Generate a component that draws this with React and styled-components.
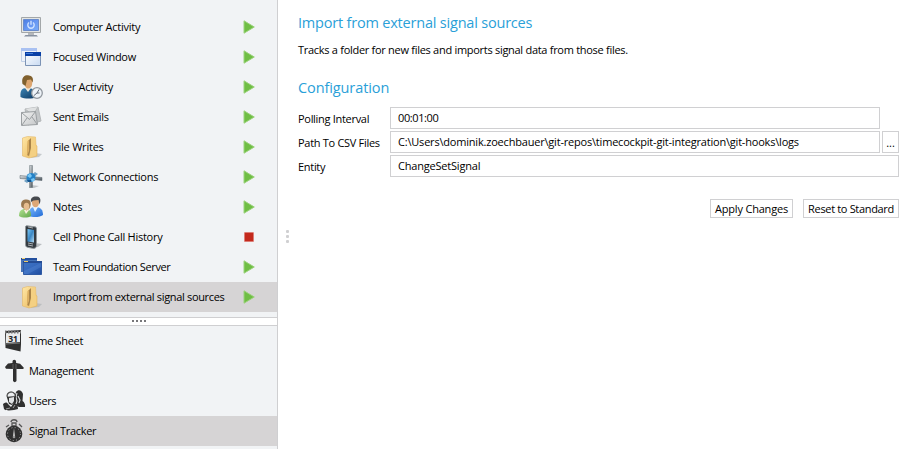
import React from "react";
import styled, { createGlobalStyle } from "styled-components";

const Global = createGlobalStyle`
  * { box-sizing: border-box; }
  body { margin: 0; background: #fff; overflow: hidden; }
`;

const Window = styled.div`
  display: flex;
  width: 914px;
  height: 449px;
  background: #fff;
  color: #000;
  font: 11px/16px "Open Sans", "Noto Sans", sans-serif;
`;
const Sidebar = styled.aside`
  display: flex;
  flex-direction: column;
  flex: 0 0 278px;
  background: #f1f3f5;
  border-right: 1px solid #cfcfd1;
`;
const SignalList = styled.nav`
  height: 317px;
  padding-top: 12px;
`;
const Row = styled.div`
  display: flex;
  align-items: center;
  height: 30px;
  padding-left: ${(p) => p.$indent}px;
  background: ${(p) => (p.$selected ? "#d6d4d5" : "transparent")};
`;
const IconSlot = styled.span`
  display: flex;
  flex: 0 0 ${(p) => p.$width}px;
`;
const Text = styled.span`
  white-space: pre;
  letter-spacing: ${(p) => p.$track || 0}px;
`;
const RowLabel = styled(Text)`
  flex: 1;
`;
const StateSlot = styled.span`
  display: flex;
  flex: 0 0 35px;
`;
const Splitter = styled.div`
  display: flex;
  justify-content: center;
  gap: 2px;
  height: 9px;
  padding-top: 2px;
  background: #fff;
  border: solid #cfcfd1;
  border-width: 1px 0;
`;
const Grip = styled.i`
  width: 2px;
  height: 2px;
  background: #77777a;
`;
const SideSplitter = styled.div`
  display: flex;
  flex-direction: column;
  align-items: center;
  gap: 2px;
  flex: 0 0 20px;
  padding: 230px 1px 0 0;
`;
const SideGrip = styled.i`
  width: 3px;
  height: 3px;
  border-radius: 1px;
  background: #d0d0d2;
`;
const Content = styled.main`
  width: 601px;
  padding-top: 12px;
`;
const Heading = styled.h2`
  margin: 0;
  color: #2a9fd8;
  font-size: 14.5px;
  font-weight: 400;
  line-height: 22px;
  white-space: pre;
  letter-spacing: ${(p) => p.$track || 0}px;
`;
const Description = styled.p`
  margin: 8px 0 19px;
  letter-spacing: -0.285px;
`;
const Form = styled.div`
  display: grid;
  grid-template-columns: 92px 490px 19px;
  grid-auto-rows: 22px;
  gap: 2px 0;
  padding-top: 8px;
`;
const FieldLabel = styled(Text)`
  padding-top: 4px;
`;
const Field = styled.div`
  grid-column: 2 / ${(p) => (p.$wide ? 4 : 3)};
  padding: 2px 7px;
  border: 1px solid #d0d0d2;
`;
const Button = styled.button`
  display: flex;
  align-items: center;
  justify-content: center;
  width: ${(p) => p.$width}px;
  height: 19px;
  padding: 0;
  font: inherit;
  color: inherit;
  background: #fff;
  border: 1px solid #d0d0d2;
`;
const BrowseButton = styled(Button)`
  height: 22px;
  margin-left: 2px;
  padding-top: 2px;
`;
const Actions = styled.div`
  display: flex;
  justify-content: flex-end;
  gap: 10px;
  margin-top: 22px;
`;

const Svg = ({ children, size = 24 }) => (
  <svg width={size} height={size} viewBox={`0 0 ${size} ${size}`}>{children}</svg>
);

const Grad = ({ id, from, to, mid }) => (
  <defs>
    <linearGradient id={id} x1="0" y1="0" x2="1" y2="1">
      <stop stopColor={from} />
      {mid && <stop offset=".5" stopColor={mid} />}
      <stop offset="1" stopColor={to} />
    </linearGradient>
  </defs>
);

const Monitor = () => (
  <Svg>
    <Grad id="screen" from="#4c7ce0" mid="#6797f2" to="#79adf9" />
    <path d="M2.500 2.500h19v15h-19z" fill="#e3e5e4" stroke="#a3a7a9" />
    <path d="M4.500 4.500h15v11h-15z" fill="url(#screen)" stroke="#6a8ccd" />
    <path d="M9 18h6v2H9z" fill="#b5b8bc" />
    <path d="M6.500 20h11l1.500 1.500H5z" fill="#8791a0" />
    <path d="M10 7.500a3.200 3.200 0 1 0 4 0M12 5.800v4" fill="none" stroke="#cfe2ff" strokeWidth="1.400" />
  </Svg>
);
const Windows = () => (
  <Svg>
    <Grad id="winbody" from="#ffffff" to="#c8daf2" />
    <path d="M2.500 3.500h15v13h-15z" fill="#edf2fa" stroke="#c0cfe6" />
    <path d="M2 3h16v3H2z" fill="#a9c1f2" />
    <path d="M6.500 7.500h15v13h-15z" fill="url(#winbody)" stroke="#7c93b5" />
    <path d="M6 7h16v4H6z" fill="#083fa6" />
    <path d="M7 8h7v1H7z" fill="#3e79d6" />
  </Svg>
);
const UserClock = () => (
  <Svg>
    <Grad id="shirt" from="#3d85b5" to="#0b3660" />
    <path d="M1.500 22c-.5-6 1-9 6-9h3c5 1 7 4 7 9-4 2-12 2-16 0z" fill="url(#shirt)" />
    <path d="m6 13 3 4 3-4z" fill="#f3e8d8" />
    <path d="M4.500 5c1-4 8-4 9 0l-.5 5c-1 4-5 5-7 1z" fill="#dca56f" />
    <path d="M3.500 9C2 2 6-.5 10 .5c4 .5 4.500 3.500 3.500 7L12 4.500 8 5 6.500 11z" fill="#80602e" />
    <circle cx="18" cy="18" r="5.300" fill="#eef3f8" stroke="#92989f" strokeWidth="1.300" />
    <path d="m15 20.500 3-2.500 2-3.500M18 18h2.500" fill="none" stroke="#626c79" />
  </Svg>
);
const Mail = () => (
  <Svg>
    <Grad id="mail" from="#f2f3f3" to="#c4c6c8" />
    <path d="m6 4 13-2 3 14-13 4z" fill="#c3c6c8" stroke="#b4b7b9" />
    <path d="m6 4 8 6 5-8" fill="#dfe1e2" stroke="#b7babb" />
    <path d="m2.500 7.500 14-1 2 13-16 1z" fill="url(#mail)" stroke="#9b9fa2" />
    <path d="m2.500 7.500 8 7 6-8M3 20l5-7m10 6-5-7" fill="none" stroke="#999da0" />
  </Svg>
);
const Folder = () => (
  <Svg>
    <Grad id="folder" from="#ffe7a5" to="#e9b75c" />
    <path d="m16 18 7 1-3 3-8 1z" fill="#aeb2b5" opacity=".65" />
    <path d="m3.500 3 5-1.500 8 .5.500 8 1 1v10l-8 2-6.500-2z" fill="url(#folder)" stroke="#e2b766" strokeWidth=".6" />
    <path d="m9 6 3-3v10l-2 8-2-1z" fill="#aa8449" />
    <path d="m8.500 6 1.500-1v11l-2 5z" fill="#dfb162" />
    <path d="m12 3 4.500-.5v8l1 1v9l-7 2 1.500-8z" fill="#f4d083" />
  </Svg>
);
const Network = () => (
  <Svg>
    <Grad id="pipe" from="#dde1e3" mid="#92999e" to="#4c555c" />
    <path d="m12 20 8 1-5 2h-5z" fill="#bfc3c6" />
    <path d="M10.500.5h3v22h-3z" fill="url(#pipe)" stroke="#69747b" strokeWidth=".5" />
    <path d="m1 10.500 22 2v3l-22-2z" fill="url(#pipe)" stroke="#58646c" strokeWidth=".5" />
    <path d="m5 16 11-9 3 2-11 9z" fill="#70a0c2" />
    <circle cx="12" cy="12.500" r="4.500" fill="#2582c7" />
    <path d="m8 11 3-3 2 3-2 2zM12 14l3-1 1 2-3 2z" fill="#79c8f6" />
    <path d="M8 15h4v2H9z" fill="#125592" />
  </Svg>
);
const People = () => (
  <Svg>
    <Grad id="green" from="#b3e394" to="#62a64a" />
    <Grad id="blue" from="#77b6ff" to="#226bd5" />
    <path d="M10 21c0-6 1-9 6-9 6 0 8 3 8 8-2 2-10 3-14 1z" fill="url(#blue)" />
    <path d="m14 12 2 5 3-5z" fill="#e8f3ff" />
    <ellipse cx="16.500" cy="7.500" rx="3.600" ry="4.800" fill="#dda777" />
    <path d="M12 7C11 2 15 1 18 1.500c4 .5 4 4 2.500 8l-1-4.500-5 .5z" fill="#46494e" />
    <path d="M0 21c0-5 2-7 6-7 5 0 6 2 6 7-3 2-9 2-12 0z" fill="url(#green)" />
    <path d="m5 15 2 4 3-4z" fill="#f8f0e0" />
    <path d="M2.500 12C1 6 4 4.500 7.500 4.500c5 0 5 5 3 9l-3 2z" fill="#9b7850" />
    <ellipse cx="7.500" cy="11.500" rx="2.800" ry="3.700" fill="#e7bd8f" />
  </Svg>
);
const Phone = () => (
  <Svg>
    <Grad id="phone" from="#79c8f6" mid="#3b87c4" to="#b7def5" />
    <path d="m16 18 7 1-4 3-5 1z" fill="#b9bdc0" />
    <path d="m8 .8 8 1c1 0 1.500 1 1.500 2v17c0 2-2 3-4 2.500l-5-1C7 22 6.500 21 6.500 19V2c0-1 .5-1.200 1.500-1.200z" fill="#353b41" stroke="#91979b" />
    <path d="m8.500 4 6.500 1v12.500l-6.500-1z" fill="url(#phone)" />
    <path d="m9 2 5 1M9 18l5 1m-5 1 5 1" stroke="#aab0b4" />
  </Svg>
);
const Server = () => (
  <Svg>
    <Grad id="server" from="#3f75c4" mid="#3468bd" to="#204c9e" />
    <path d="M2 3h16v14H2z" fill="#4774b8" />
    <path d="M2 3h16v2H2z" fill="#234f9e" />
    <path d="M3 3h3v1H3z" fill="#f4d06c" />
    <path d="M4.500 6.500h18v13h-18z" fill="url(#server)" stroke="#2f5aa4" />
    <path d="M4 6h19v2H4z" fill="#244c94" />
    <path d="M5 6h4v1H5z" fill="#edcc6b" />
    <path d="m5 16 17-8v4L9 19H5z" fill="#5587d3" opacity=".4" />
  </Svg>
);

const Play = () => (
  <Svg size={14}>
    <path d="m2 .8 10.300 6.200L2 13.200z" fill="#6fbe44" stroke="#9bd27c" strokeWidth="1" strokeLinejoin="round" />
  </Svg>
);
const Stop = () => (
  <Svg size={14}>
    <rect x="2.500" y="2.500" width="9" height="9" rx=".5" fill="#c3291c" stroke="#dc7e77" />
  </Svg>
);

const Calendar = () => (
  <Svg>
    <path d="m2 2 16-1v14l-.5 7.500L2.500 19z" fill="#303030" />
    <path d="m3 4 14-1v10l-14 1z" fill="#e8eaeb" />
    <path d="M2 3h16" stroke="#777" strokeWidth="3" strokeDasharray="1.500 1.500" />
    <text x="10" y="12.500" textAnchor="middle" fontFamily="Open Sans" fontWeight="700" fontSize="8.500" fill="#222">31</text>
    <path d="m2.500 15 14.500-1" stroke="#777" />
  </Svg>
);
const Signpost = () => (
  <Svg>
    <path d="M9.500 2.500a1.800 1.800 0 0 1 3.600 0V4l4 .8L21 9l-1 1h-6.500v12c-1 1.500-2.500 1.500-3.500 0V10L3 9.800 2 8l3-3.500L9.500 4z" fill="#303030" />
    <path d="M10 5v5m3-5v5" stroke="#777" strokeWidth=".7" />
  </Svg>
);
const UsersDark = () => (
  <Svg>
    <path d="M13 3c2-3 6-2 7 2l-.5 7c2 1 3 4 2.500 6h-6l-6-3z" fill="#303030" />
    <path d="m14 4-1 4 1 4-1 3m2-8 2 4-1 3" fill="none" stroke="#d9dbdd" strokeWidth="1.100" />
    <path d="M3.500 7c0-6 9-6 9.500 0l-1 5-3 4-3-1z" fill="#303030" />
    <path d="M4.200 7c1-5 7-5 8 0l-2 .5-5 .5z" fill="#eceef0" stroke="#555" strokeWidth=".7" />
    <path d="m6 9 5-1v4l-2 3-3-2z" fill="#e0e2e4" />
    <path d="M0 15c2-2 4-2 5 0l3 3 2-3c4 0 5 2 5 5l-4 1c-4 .5-8 1-10-1z" fill="#303030" />
    <path d="m3 20 4-1m3 0 2-3" stroke="#bbb" strokeWidth=".8" />
  </Svg>
);
const Stopwatch = () => (
  <Svg>
    <path d="M8 3c0-3 6-3 6 0M9 4h4v3H9zM3 8l3-2M16 5l3 3" fill="none" stroke="#555" strokeWidth="1.300" />
    <circle cx="11" cy="15" r="8.300" fill="#303030" />
    <circle cx="11" cy="15" r="6.500" fill="none" stroke="#aaa" strokeWidth="1" strokeDasharray="1 2.400" />
    <path d="m11 9 .8 8h-1.600z" fill="#eee" />
    <circle cx="11" cy="18" r="1.300" fill="#999" />
  </Svg>
);

const signals = [
  { name: "Computer Activity", icon: Monitor, track: -0.24 },
  { name: "Focused Window", icon: Windows, track: -0.28 },
  { name: "User Activity", icon: UserClock, track: -0.27 },
  { name: "Sent Emails", icon: Mail, track: -0.3 },
  { name: "File Writes", icon: Folder, track: -0.22 },
  { name: "Network Connections", icon: Network, track: -0.28 },
  { name: "Notes", icon: People, track: -0.2 },
  { name: "Cell Phone Call History", icon: Phone, track: -0.26, stopped: true },
  { name: "Team Foundation Server", icon: Server, track: -0.38 },
  { name: "Import from external signal sources", icon: Folder, track: -0.33, selected: true },
];
const modules = [
  { name: "Time Sheet", icon: Calendar, track: -0.3 },
  { name: "Management", icon: Signpost, track: -0.33 },
  { name: "Users", icon: UsersDark, track: -0.4 },
  { name: "Signal Tracker", icon: Stopwatch, track: -0.32, selected: true },
];

export default function App() {
  return (
    <Window>
      <Global />
      <Sidebar>
        <SignalList>
          {signals.map(({ name, icon: Icon, track, stopped, selected }) => (
            <Row key={name} $indent={19} $selected={selected}>
              <IconSlot $width={34}><Icon /></IconSlot>
              <RowLabel $track={track}>{name}</RowLabel>
              <StateSlot>{stopped ? <Stop /> : <Play />}</StateSlot>
            </Row>
          ))}
        </SignalList>
        <Splitter><Grip /><Grip /><Grip /><Grip /></Splitter>
        {modules.map(({ name, icon: Icon, track, selected }) => (
          <Row key={name} $indent={3} $selected={selected}>
            <IconSlot $width={26}><Icon /></IconSlot>
            <RowLabel $track={track}>{name}</RowLabel>
          </Row>
        ))}
      </Sidebar>
      <SideSplitter><SideGrip /><SideGrip /><SideGrip /></SideSplitter>
      <Content>
        <Heading $track={-0.2}>Import from external signal sources</Heading>
        <Description>Tracks a folder for new files and imports signal data from those files.</Description>
        <Heading $track={-0.1}>Configuration</Heading>
        <Form>
          <FieldLabel $track={-0.3}>Polling Interval</FieldLabel>
          <Field><Text $track={-0.4}>00:01:00</Text></Field>
          <span />
          <FieldLabel $track={-0.3}>Path To CSV Files</FieldLabel>
          <Field><Text $track={-0.197}>C:\Users\dominik.zoechbauer\git-repos\timecockpit-git-integration\git-hooks\logs</Text></Field>
          <BrowseButton $width={17}>...</BrowseButton>
          <FieldLabel $track={-0.3}>Entity</FieldLabel>
          <Field $wide><Text $track={-0.2}>ChangeSetSignal</Text></Field>
        </Form>
        <Actions>
          <Button $width={83}><Text $track={-0.2}>Apply Changes</Text></Button>
          <Button $width={96}><Text $track={-0.33}>Reset to Standard</Text></Button>
        </Actions>
      </Content>
    </Window>
  );
}
